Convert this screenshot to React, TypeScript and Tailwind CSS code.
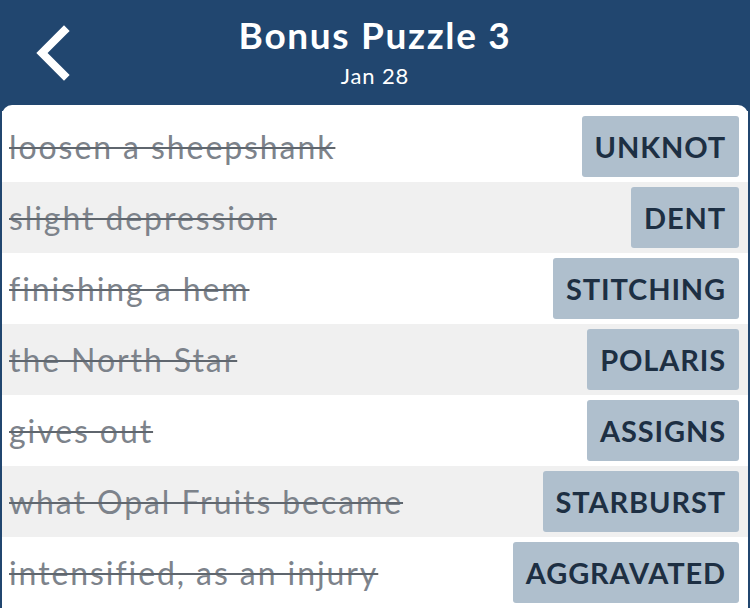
const clues = [
  { clue: "loosen a sheepshank", answer: "UNKNOT" },
  { clue: "slight depression", answer: "DENT" },
  { clue: "finishing a hem", answer: "STITCHING" },
  { clue: "the North Star", answer: "POLARIS" },
  { clue: "gives out", answer: "ASSIGNS" },
  { clue: "what Opal Fruits became", answer: "STARBURST" },
  { clue: "intensified, as an injury", answer: "AGGRAVATED" },
];

function BackChevron() {
  return (
    <svg width="40" height="56" viewBox="0 0 40 56" className="absolute left-[32px] top-[25px]">
      <polyline points="32,6 10,28 32,50" fill="none" stroke="white" strokeWidth="8" strokeLinecap="square" />
    </svg>
  );
}

export default function App() {
  return (
    <div className="h-[608px] w-[750px] overflow-hidden bg-[#21466f]" style={{ fontFamily: "Lato, 'Open Sans', sans-serif" }}>
      <div className="relative flex h-[105px] flex-col items-center">
        <BackChevron />
        <h1 className="mt-[12px] text-[37px] font-bold leading-[46px] tracking-[0.045em] text-white">Bonus Puzzle 3</h1>
        <p className="mt-[5px] text-[22px] leading-[26px] tracking-[0.04em] text-white">Jan 28</p>
      </div>

      <div className="mx-[2px] rounded-t-[10px] bg-white pt-[6px]">
        {clues.map((c, i) => (
          <div
            key={c.answer}
            className={`flex h-[71px] items-center justify-between pl-[7px] pr-[9px] ${i % 2 === 1 ? "bg-[#f0f0f0]" : "bg-white"}`}
          >
            <span className="text-[32px] tracking-[0.06em] text-[#7d838b] line-through decoration-[#5f666e] decoration-[1.5px]">
              {c.clue}
            </span>
            <span className="flex h-[61px] items-center rounded-[3px] bg-[#afbfcd] px-[13px] text-[29px] font-bold tracking-[0.03em] text-[#1d2f43]">
              {c.answer}
            </span>
          </div>
        ))}
      </div>
    </div>
  );
}
